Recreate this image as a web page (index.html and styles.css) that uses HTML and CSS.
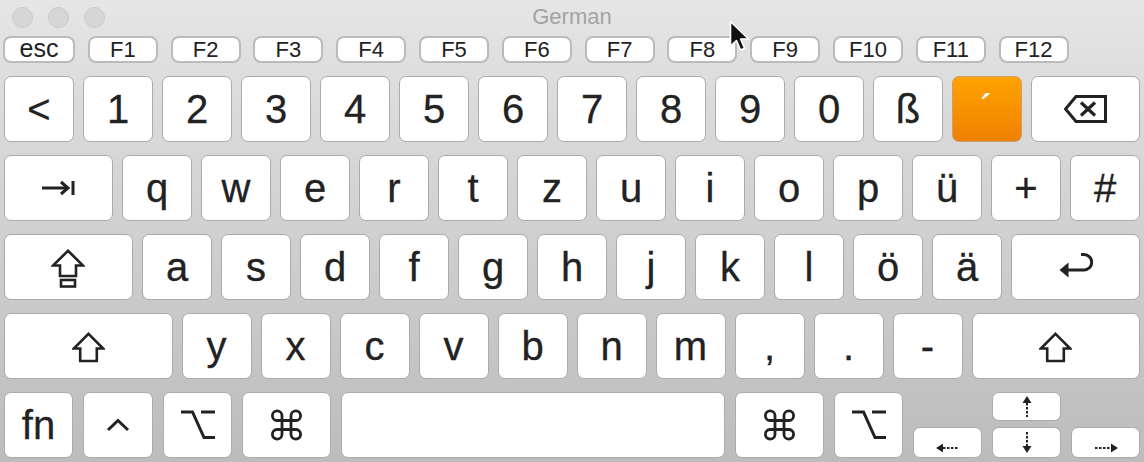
FILE: index.html
```html
<!DOCTYPE html>
<html lang="de">

<head>
    <meta charset="UTF-8">
    <title>German</title>
    <link rel="stylesheet" href="styles.css">
</head>

<body>
    <div class="window">
        <div class="titlebar">
            <div class="lights">
                <span class="light"></span>
                <span class="light"></span>
                <span class="light"></span>
            </div>
            <div class="title">German</div>
        </div>

        <div class="fnrow">
            <span class="fkey esc">esc</span>
            <span class="fkey">F1</span>
            <span class="fkey">F2</span>
            <span class="fkey">F3</span>
            <span class="fkey">F4</span>
            <span class="fkey">F5</span>
            <span class="fkey">F6</span>
            <span class="fkey">F7</span>
            <span class="fkey">F8</span>
            <span class="fkey">F9</span>
            <span class="fkey">F10</span>
            <span class="fkey">F11</span>
            <span class="fkey">F12</span>
        </div>

        <div class="keys">
            <div class="row">
                <span class="key">&lt;</span>
                <span class="key">1</span>
                <span class="key">2</span>
                <span class="key">3</span>
                <span class="key">4</span>
                <span class="key">5</span>
                <span class="key">6</span>
                <span class="key">7</span>
                <span class="key">8</span>
                <span class="key">9</span>
                <span class="key">0</span>
                <span class="key">ß</span>
                <span class="key active">´</span>
                <span class="key wide">
                    <svg width="44" height="29" viewBox="0 0 44 29">
                        <path d="M12 1.5 H41.5 V26.5 H12 L1.5 14 Z" fill="none" stroke="#222" stroke-width="3" />
                        <path d="M17 7.5 L31 20.5 M31 7.5 L17 20.5" stroke="#222" stroke-width="3.2" />
                    </svg>
                </span>
            </div>

            <div class="row">
                <span class="key wide">
                    <svg width="34" height="16" viewBox="0 0 34 16">
                        <path d="M0 8 H25" stroke="#222" stroke-width="3" />
                        <path d="M19 2 L26 8 L19 14" fill="none" stroke="#222" stroke-width="3" />
                        <rect x="29.5" y="1" width="3" height="14" fill="#222" />
                    </svg>
                </span>
                <span class="key">q</span>
                <span class="key">w</span>
                <span class="key">e</span>
                <span class="key">r</span>
                <span class="key">t</span>
                <span class="key">z</span>
                <span class="key">u</span>
                <span class="key">i</span>
                <span class="key">o</span>
                <span class="key">p</span>
                <span class="key">ü</span>
                <span class="key">+</span>
                <span class="key">#</span>
            </div>

            <div class="row">
                <span class="key wide">
                    <svg class="caps" width="34" height="39" viewBox="0 0 34 39">
                        <path d="M17 1.8 L32 16.5 H25 V27 H9 V16.5 H2 Z" fill="none" stroke="#222" stroke-width="2.6" stroke-linejoin="miter" />
                        <rect x="10" y="31" width="14" height="6.5" fill="none" stroke="#222" stroke-width="2.6" />
                    </svg>
                </span>
                <span class="key">a</span>
                <span class="key">s</span>
                <span class="key">d</span>
                <span class="key">f</span>
                <span class="key">g</span>
                <span class="key">h</span>
                <span class="key">j</span>
                <span class="key">k</span>
                <span class="key">l</span>
                <span class="key">ö</span>
                <span class="key">ä</span>
                <span class="key wide">
                    <svg class="ret" width="34" height="26" viewBox="0 0 34 26">
                        <path d="M7 18 H25 A7.7 7.7 0 0 0 25 2.6 H22" fill="none" stroke="#222" stroke-width="3" />
                        <path d="M0.5 18 L9.5 10.5 V25.5 Z" fill="#222" />
                    </svg>
                </span>
            </div>

            <div class="row">
                <span class="key wide">
                    <svg class="shift" width="33" height="31" viewBox="0 0 33 31">
                        <path d="M16.5 1.8 L31.2 16.5 H24.8 V29 H8.2 V16.5 H1.8 Z" fill="none" stroke="#222" stroke-width="2.6" />
                    </svg>
                </span>
                <span class="key">y</span>
                <span class="key">x</span>
                <span class="key">c</span>
                <span class="key">v</span>
                <span class="key">b</span>
                <span class="key">n</span>
                <span class="key">m</span>
                <span class="key">,</span>
                <span class="key">.</span>
                <span class="key">-</span>
                <span class="key wide">
                    <svg class="shift" width="33" height="31" viewBox="0 0 33 31">
                        <path d="M16.5 1.8 L31.2 16.5 H24.8 V29 H8.2 V16.5 H1.8 Z" fill="none" stroke="#222" stroke-width="2.6" />
                    </svg>
                </span>
            </div>

            <div class="row bottom">
                <span class="key fn">fn</span>
                <span class="key ctrl">
                    <svg width="24" height="14" viewBox="0 0 24 14">
                        <path d="M2 12 L12 2.5 L22 12" fill="none" stroke="#222" stroke-width="3" />
                    </svg>
                </span>
                <span class="key alt">
                    <svg width="34" height="30" viewBox="0 0 34 30">
                        <path d="M0 2 H11.5 L23 27.5 H34 M20 2 H34" fill="none" stroke="#222" stroke-width="3" />
                    </svg>
                </span>
                <span class="key cmd">
                    <svg width="33" height="32" viewBox="0 0 32 32">
                        <path d="M11.5 11.5 V6.5 A4.8 4.8 0 1 0 6.5 11.5 H25.5 A4.8 4.8 0 1 0 20.5 6.5 V25.5 A4.8 4.8 0 1 0 25.5 20.5 H6.5 A4.8 4.8 0 1 0 11.5 25.5 Z" fill="none" stroke="#222" stroke-width="2.8" />
                    </svg>
                </span>
                <span class="key space"></span>
                <span class="key cmd">
                    <svg width="33" height="32" viewBox="0 0 32 32">
                        <path d="M11.5 11.5 V6.5 A4.8 4.8 0 1 0 6.5 11.5 H25.5 A4.8 4.8 0 1 0 20.5 6.5 V25.5 A4.8 4.8 0 1 0 25.5 20.5 H6.5 A4.8 4.8 0 1 0 11.5 25.5 Z" fill="none" stroke="#222" stroke-width="2.8" />
                    </svg>
                </span>
                <span class="key alt">
                    <svg width="34" height="30" viewBox="0 0 34 30">
                        <path d="M0 2 H11.5 L23 27.5 H34 M20 2 H34" fill="none" stroke="#222" stroke-width="3" />
                    </svg>
                </span>
                <div class="arrows">
                    <span class="akey">
                        <svg width="24" height="10" viewBox="0 0 24 10">
                            <path d="M0 5 L7 0.5 V9.5 Z" fill="#222" />
                            <path d="M7 5 H23" stroke="#222" stroke-width="2" stroke-dasharray="2.5 1.5" />
                        </svg>
                    </span>
                    <div class="updown">
                        <span class="akey up">
                            <svg width="10" height="21" viewBox="0 0 10 21">
                                <path d="M5 0 L9.5 7 H0.5 Z" fill="#222" />
                                <path d="M5 7 V21" stroke="#222" stroke-width="2" stroke-dasharray="2.5 1.5" />
                            </svg>
                        </span>
                        <span class="akey">
                            <svg width="10" height="21" viewBox="0 0 10 21">
                                <path d="M5 0 V14" stroke="#222" stroke-width="2" stroke-dasharray="2.5 1.5" />
                                <path d="M5 21 L9.5 14 H0.5 Z" fill="#222" />
                            </svg>
                        </span>
                    </div>
                    <span class="akey">
                        <svg width="24" height="10" viewBox="0 0 24 10">
                            <path d="M1 5 H17" stroke="#222" stroke-width="2" stroke-dasharray="2.5 1.5" />
                            <path d="M24 5 L17 0.5 V9.5 Z" fill="#222" />
                        </svg>
                    </span>
                </div>
            </div>
        </div>

        <!-- mouse pointer over the window -->
        <svg class="cursor" width="24" height="36" viewBox="0 0 24 36">
            <path d="M1.5 1.5 V26 L7.5 20.5 L11.5 30 L15.5 28.3 L11.6 19 H19.5 Z" fill="#111" stroke="#fff" stroke-width="1.6" stroke-linejoin="round" />
        </svg>
    </div>
</body>

</html>
```

FILE: styles.css
```css
* {
    margin: 0;
    padding: 0;
    box-sizing: border-box;
}

body {
    background-color: #bdbdbd;
    font-family: "Liberation Sans", Arial, sans-serif;
}

.window {
    position: relative;
    width: 1144px;
    height: 462px;
    padding: 0 4px;
    overflow: hidden;
    background: linear-gradient(#e6e6e6 0, #dedede 70px, #bcbcbc 100%);
}

.titlebar {
    display: grid;
    grid-template-columns: 1fr auto 1fr;
    align-items: center;
    height: 36px;
    padding-bottom: 2px;
}

.lights {
    display: flex;
    gap: 15px;
    padding-left: 8px;
}

.light {
    width: 21px;
    height: 21px;
    border-radius: 50%;
    background-color: #d6d6d6;
    border: 1px solid #c9c9c9;
}

.title {
    font-size: 22px;
    color: #a3a3a3;
    margin-left: 0;
}

.fnrow {
    display: flex;
    gap: 12.8px;
    height: 27px;
    margin-bottom: 13px;
}

.fkey {
    width: 70px;
    height: 27px;
    background-color: #fff;
    border: 2px solid #bbbbbb;
    border-radius: 8px;
    display: flex;
    align-items: center;
    justify-content: center;
    font-size: 22px;
    color: #222;
}

.fkey.esc {
    width: 72px;
    margin-left: -1px;
    font-size: 25px;
    padding-bottom: 2px;
}

.keys {
    display: flex;
    flex-direction: column;
    gap: 13px;
}

.row {
    display: flex;
    gap: 9px;
    height: 66px;
}

.key {
    width: 70px;
    height: 66px;
    flex-shrink: 0;
    background-color: #fff;
    border: 1px solid #ababab;
    border-radius: 7px;
    display: flex;
    align-items: center;
    justify-content: center;
    font-size: 40px;
    color: #222;
    -webkit-text-stroke: 0.3px #222;
}

.key.wide {
    flex: 1;
}

.key.active {
    background: linear-gradient(#ffa300, #ef8000);
    border-color: #c9a070;
    color: #fff;
    -webkit-text-stroke: 0;
}

.caps {
    margin-left: -2px;
    margin-top: 2px;
}

.ret {
    margin-left: 1px;
    margin-top: -4px;
}

.shift {
    margin-top: 2px;
}

.row.bottom {
    gap: 10px;
}

.key.fn {
    width: 69px;
}

.key.alt {
    width: 69px;
}

.key.cmd {
    width: 89px;
}

.key.space {
    flex: 1;
}

.arrows {
    display: flex;
    gap: 10px;
    align-items: flex-end;
}

.updown {
    display: flex;
    flex-direction: column;
    gap: 6px;
}

.akey {
    width: 69px;
    height: 31px;
    background-color: #fff;
    border: 1px solid #ababab;
    border-radius: 7px;
    display: flex;
    align-items: flex-end;
    justify-content: center;
    padding-bottom: 4px;
}

.akey.up {
    height: 29px;
    align-items: center;
    padding-bottom: 0;
}

.cursor {
    position: absolute;
    left: 729px;
    top: 20px;
}
```
